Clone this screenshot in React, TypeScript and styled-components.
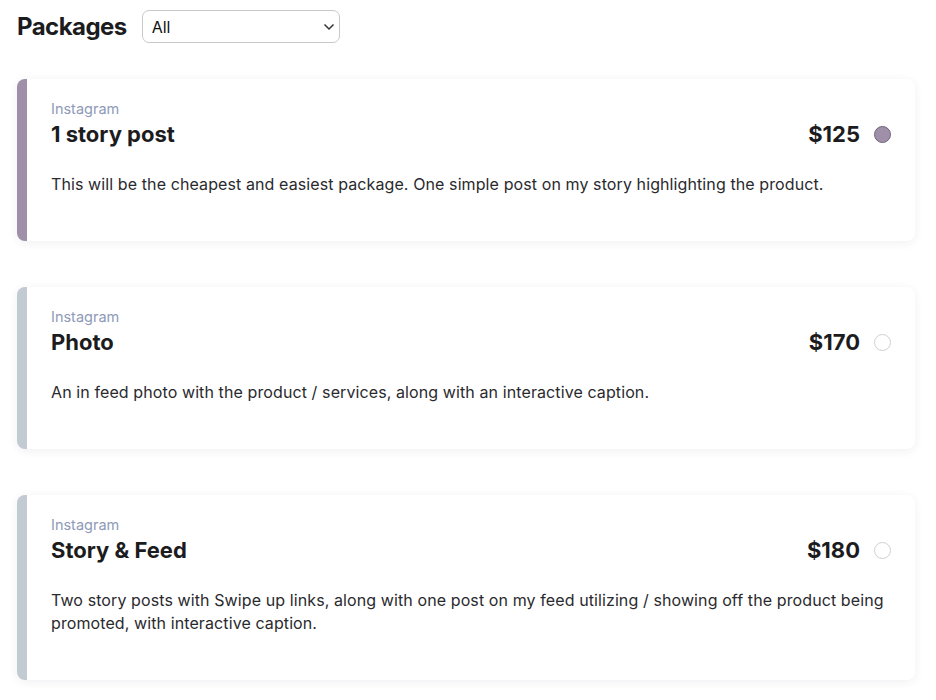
import React, { useState } from "react";
import styled, { createGlobalStyle } from "styled-components";

const GlobalStyle = createGlobalStyle`
    body {
        margin: 0;
        background: #ffffff;
        font-family: Inter, "Noto Sans", sans-serif;
        color: #1c1c1e;
    }
`;

const Page = styled.div`
    padding: 10px 21px 20px 17px;
`;

const Header = styled.div`
    display: flex;
    align-items: center;
    gap: 15px;
    margin-bottom: 36px;
`;

const Heading = styled.h1`
    margin: 0;
    font-size: 24px;
    font-weight: 700;
    letter-spacing: -0.55px;
`;

const SelectWrap = styled.div`
    position: relative;
    width: 198px;
    height: 33px;
`;

const Select = styled.select`
    appearance: none;
    width: 100%;
    height: 100%;
    border: 1px solid #c9c9cc;
    border-radius: 7px;
    background: #fff;
    padding: 0 9px;
    font-family: Inter, sans-serif;
    font-size: 16px;
    color: #111;
`;

const Chevron = styled.svg`
    position: absolute;
    right: 5px;
    top: 13px;
    pointer-events: none;
`;

const List = styled.div`
    display: flex;
    flex-direction: column;
    gap: 46px;
`;

const Card = styled.div<{ $active: boolean }>`
    display: flex;
    background: #fff;
    border-radius: 8px;
    border-left: 10px solid ${(p) => (p.$active ? "#9f8fa9" : "#c2cad2")};
    box-shadow: 0 2px 10px rgba(40, 40, 80, 0.07);
    padding: 20px 24px 45px 24px;
    cursor: pointer;
`;

const Body = styled.div`
    flex: 1;
`;

const TopRow = styled.div`
    display: flex;
    align-items: flex-end;
`;

const Titles = styled.div`
    flex: 1;
`;

const Platform = styled.div`
    font-size: 14.5px;
    line-height: 20px;
    color: #8e9ab8;
`;

const Title = styled.div`
    font-size: 22px;
    line-height: 30px;
    font-weight: 700;
`;

const Price = styled.div`
    font-size: 22px;
    line-height: 30px;
    font-weight: 700;
    margin-right: 14px;
`;

const Radio = styled.span<{ $active: boolean }>`
    width: 17px;
    height: 17px;
    box-sizing: border-box;
    border-radius: 50%;
    margin-bottom: 6px;
    border: 1.5px solid ${(p) => (p.$active ? "#6f6479" : "#cfcfd2")};
    background: ${(p) => (p.$active ? "#9f8fa9" : "#fff")};
`;

const Desc = styled.p`
    margin: 24px 0 0;
    font-size: 16px;
    line-height: 23px;
    color: #2a2a2e;
    letter-spacing: 0.1px;
`;

const packages = [
    {
        platform: "Instagram",
        title: "1 story post",
        price: "$125",
        desc: "This will be the cheapest and easiest package. One simple post on my story highlighting the product.",
    },
    {
        platform: "Instagram",
        title: "Photo",
        price: "$170",
        desc: "An in feed photo with the product / services, along with an interactive caption.",
    },
    {
        platform: "Instagram",
        title: "Story & Feed",
        price: "$180",
        desc: "Two story posts with Swipe up links, along with one post on my feed utilizing / showing off the product being promoted, with interactive caption.",
    },
];

const App = () => {
    const [selected, setSelected] = useState(0);
    return (
        <Page>
            <GlobalStyle />
            <Header>
                <Heading>Packages</Heading>
                <SelectWrap>
                    <Select defaultValue="all">
                        <option value="all">All</option>
                        <option value="instagram">Instagram</option>
                    </Select>
                    <Chevron width="12" height="8" viewBox="0 0 12 8">
                        <path d="M1.5 1.5 L6 6 L10.5 1.5" fill="none" stroke="#333" strokeWidth="1.5" />
                    </Chevron>
                </SelectWrap>
            </Header>
            <List>
                {packages.map((p, i) => (
                    <Card key={p.title} $active={selected === i} onClick={() => setSelected(i)}>
                        <Body>
                            <TopRow>
                                <Titles>
                                    <Platform>{p.platform}</Platform>
                                    <Title>{p.title}</Title>
                                </Titles>
                                <Price>{p.price}</Price>
                                <Radio $active={selected === i} />
                            </TopRow>
                            <Desc>{p.desc}</Desc>
                        </Body>
                    </Card>
                ))}
            </List>
        </Page>
    );
};

export default App;
